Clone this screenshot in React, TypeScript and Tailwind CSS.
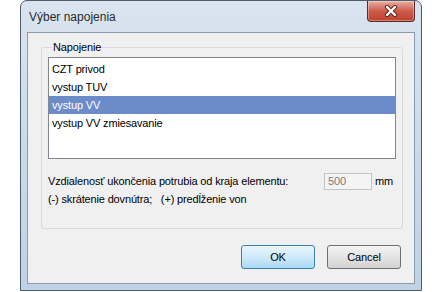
import React from "react";

const items = ["CZT privod", "vystup TUV", "vystup VV", "vystup VV zmiesavanie"];

export default function App() {
  return (
    <div
      className="w-[438px] h-[292px] bg-white overflow-hidden"
      style={{ fontFamily: '"Liberation Sans", Arial, sans-serif' }}
    >
      <div className="ml-[20px] w-[402px] h-[291px] rounded-t-[7px] border border-[#4d5d6e] bg-gradient-to-b from-[#d9e4f0] via-[#ccdaea] to-[#bfd2e8] flex flex-col">
        {/* title bar */}
        <div className="h-[31px] flex items-start shrink-0">
          <div className="mt-[8px] ml-[8px] text-[12px] leading-[16px] text-[#2a2a2a] flex-1">
            Výber napojenia
          </div>
          <div className="mr-[6px] w-[48px] h-[21px] rounded-b-[4px] border border-t-0 border-[#5a2a24] bg-gradient-to-b from-[#eab0a2] via-[#cc5a4b] to-[#c0402e] flex items-center justify-center shadow-[inset_0_0_0_1px_rgba(255,255,255,0.35)]">
            <svg width="14" height="12" viewBox="0 0 14 12">
              <path d="M3 2 L11 10 M11 2 L3 10" stroke="#5a2320" strokeWidth="4.2" strokeLinecap="round" />
              <path d="M3 2 L11 10 M11 2 L3 10" stroke="#ffffff" strokeWidth="2.4" strokeLinecap="round" />
            </svg>
          </div>
        </div>
        {/* client */}
        <div className="mx-[6px] mb-[6px] flex-1 border border-[#8c9bab] bg-[#f0f0f0] flex flex-col text-[11px] tracking-[-0.15px] text-black">
          <fieldset className="mt-[8px] ml-[13px] mr-[11px] border border-[#d5dbe0] rounded-[3px] px-[6px] pt-[3px] pb-[20px]">
            <legend className="ml-[4px] px-[1px] leading-[13px] text-black">Napojenie</legend>
            <div className="h-[102px] border border-[#828790] bg-white pt-[2px]">
              {items.map((it, i) => (
                <div
                  key={it}
                  className={
                    i === 2
                      ? "h-[18px] leading-[18px] pl-[3px] bg-[#6b8cc8] text-white"
                      : "h-[18px] leading-[18px] pl-[3px] text-black"
                  }
                >
                  {it}
                </div>
              ))}
            </div>
            <div className="mt-[13px] h-[18px] flex items-center">
              <div className="w-[276px] leading-[18px]">
                Vzdialenosť ukončenia potrubia od kraja elementu:
              </div>
              <div className="w-[48px] h-[17px] border border-[#c2c5ca] bg-[#f4f4f4] text-[#7a7a7a] pl-[3px] leading-[15px]">
                500
              </div>
              <div className="ml-[3px]">mm</div>
            </div>
            <div className="h-[18px] leading-[18px]">
              (-) skrátenie dovnútra;&nbsp;&nbsp;&nbsp;(+) predĺženie von
            </div>
          </fieldset>
          <div className="mt-[16px] mr-[13px] flex justify-end gap-[12px]">
            <button className="w-[74px] h-[24px] rounded-[3px] border border-[#3c7fb1] bg-gradient-to-b from-[#eaf6fd] via-[#cfeafb] to-[#a9d9f4] text-black text-[11px]">
              OK
            </button>
            <button className="w-[74px] h-[24px] rounded-[3px] border border-[#707070] bg-gradient-to-b from-[#f4f4f4] via-[#e4e4e4] to-[#d2d2d2] text-black text-[11px]">
              Cancel
            </button>
          </div>
        </div>
      </div>
    </div>
  );
}
